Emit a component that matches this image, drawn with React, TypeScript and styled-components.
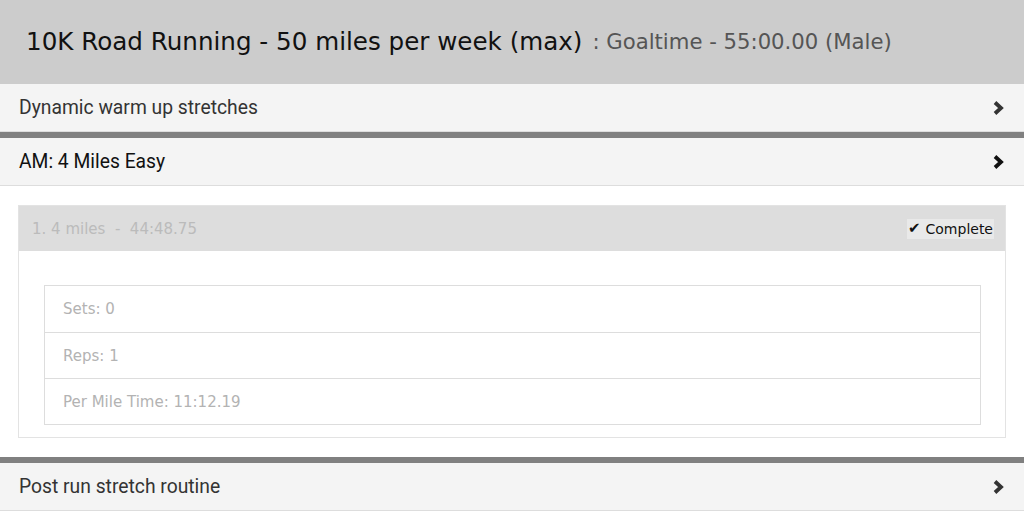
import React from 'react'
import styled, { createGlobalStyle } from 'styled-components'

const GlobalStyle = createGlobalStyle`
  html, body {
    margin: 0;
    padding: 0;
    background: #fff;
  }
  * { box-sizing: border-box; }
`

const Page = styled.div`
  width: 1024px;
  font-family: 'DejaVu Sans', Verdana, sans-serif;
`

const Header = styled.div`
  height: 84px;
  background: #cccccc;
  display: flex;
  align-items: center;
  padding: 0 0 2px 26px;
  white-space: nowrap;
`

const Title = styled.span`
  font-size: 24.6px;
  color: #111;
`

const SubTitle = styled.span`
  font-size: 21.2px;
  color: #555;
  margin-left: 10px;
`

const Section = styled.div<{ $divider?: boolean }>`
  border-top: ${(p) => (p.$divider ? '6px solid #808080' : 'none')};
`

const SectionHead = styled.div<{ $dark?: boolean }>`
  height: 48px;
  background: #f4f4f4;
  border-bottom: 1px solid #dddddd;
  display: flex;
  align-items: center;
  justify-content: space-between;
  padding: 0 20px 0 19px;
  font-family: Roboto, 'Liberation Sans', sans-serif;
  font-size: 19.3px;
  color: ${(p) => (p.$dark ? '#111' : '#333')};
`

const SectionBody = styled.div`
  padding: 19px 18px 19px 18px;
`

const Card = styled.div`
  border: 1px solid #e3e3e3;
`

const CardHead = styled.div`
  height: 45px;
  background: #dddddd;
  display: flex;
  align-items: center;
  justify-content: space-between;
  padding: 0 11px 0 13px;
  font-size: 15px;
`

const Muted = styled.span`
  color: #bbbbbb;
  white-space: pre;
`

const Badge = styled.span`
  display: flex;
  align-items: center;
  gap: 5px;
  height: 20px;
  background: #e9e9e9;
  color: #111;
  padding: 0 1px;
  font-size: 14px;
`

const Check = styled.span`
  font-size: 15px;
  line-height: 1;
`

const CardBody = styled.div`
  padding: 34px 24px 12px 25px;
`

const List = styled.div`
  border: 1px solid #dddddd;
`

const Item = styled.div`
  height: 46px;
  display: flex;
  align-items: center;
  padding: 0 18px;
  font-size: 15px;
  color: #b3b3b3;
  & + & {
    border-top: 1px solid #dddddd;
  }
`

const Chevron = ({ color }: { color: string }) => (
  <svg width="12" height="16" viewBox="0 0 12 16">
    <polyline
      points="3,2.5 9,8 3,13.5"
      fill="none"
      stroke={color}
      strokeWidth="3.8"
      strokeLinecap="butt"
      strokeLinejoin="miter"
    />
  </svg>
)

const App = () => {
  return (
    <Page>
      <GlobalStyle />
      <Header>
        <Title>10K Road Running - 50 miles per week (max)</Title>
        <SubTitle>: Goaltime - 55:00.00 (Male)</SubTitle>
      </Header>

      <Section>
        <SectionHead>
          Dynamic warm up stretches
          <Chevron color="#333" />
        </SectionHead>
      </Section>

      <Section $divider>
        <SectionHead $dark>
          AM: 4 Miles Easy
          <Chevron color="#111" />
        </SectionHead>
        <SectionBody>
          <Card>
            <CardHead>
              <Muted>1. 4 miles  -  44:48.75</Muted>
              <Badge>
                <Check>✔</Check>
                Complete
              </Badge>
            </CardHead>
            <CardBody>
              <List>
                <Item>Sets: 0</Item>
                <Item>Reps: 1</Item>
                <Item>Per Mile Time: 11:12.19</Item>
              </List>
            </CardBody>
          </Card>
        </SectionBody>
      </Section>

      <Section $divider>
        <SectionHead>
          Post run stretch routine
          <Chevron color="#333" />
        </SectionHead>
      </Section>
    </Page>
  )
}

export default App
